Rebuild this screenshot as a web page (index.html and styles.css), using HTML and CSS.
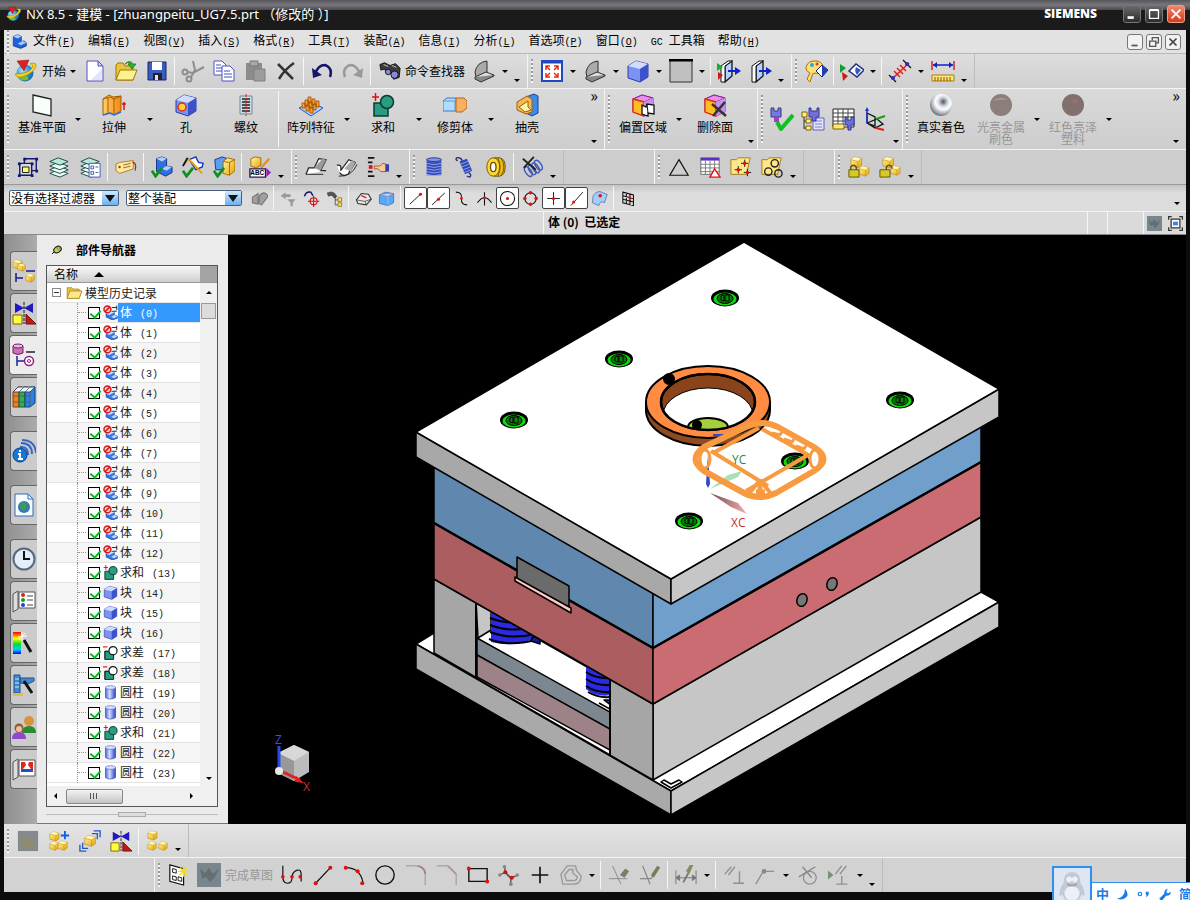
FILE: index.html
```
<!DOCTYPE html>
<html lang="zh-CN">
<head>
    <meta charset="UTF-8">
    <meta name="viewport" content="width=device-width, initial-scale=1.0">
    <title>NX 8.5 - 建模</title>
    <link rel="stylesheet" href="styles.css">
</head>
<body>
    <!-- icon sprite -->
    <svg class="sprite" aria-hidden="true">
        <defs>
            <linearGradient id="gBlue" x1="0" y1="0" x2="1" y2="1"><stop offset="0" stop-color="#c4d6ff"/><stop offset="1" stop-color="#3350d8"/></linearGradient>
            <linearGradient id="gGold" x1="0" y1="0" x2="1" y2="1"><stop offset="0" stop-color="#fff6a8"/><stop offset="1" stop-color="#e8a400"/></linearGradient>
            <linearGradient id="gOrange" x1="0" y1="0" x2="1" y2="0"><stop offset="0" stop-color="#ffcf6a"/><stop offset="1" stop-color="#f08a10"/></linearGradient>
            <linearGradient id="gRainbow" x1="0" y1="0" x2="0" y2="1"><stop offset="0" stop-color="#f00"/><stop offset=".3" stop-color="#ff0"/><stop offset=".55" stop-color="#0d3"/><stop offset=".8" stop-color="#0cf"/><stop offset="1" stop-color="#00f"/></linearGradient>
            <linearGradient id="gCyl" x1="0" y1="0" x2="1" y2="0"><stop offset="0" stop-color="#4a66e0"/><stop offset=".4" stop-color="#d4dcff"/><stop offset="1" stop-color="#2a40c0"/></linearGradient>
            <radialGradient id="gChrome" cx=".6" cy=".35" r=".7"><stop offset="0" stop-color="#50545c"/><stop offset=".3" stop-color="#d4dae2"/><stop offset=".5" stop-color="#fff"/><stop offset="1" stop-color="#5c6470"/></radialGradient>
            <radialGradient id="gGlobe" cx=".35" cy=".35" r=".8"><stop offset="0" stop-color="#aee4ff"/><stop offset=".5" stop-color="#2a9ae0"/><stop offset="1" stop-color="#0b4c9c"/></radialGradient>
        </defs>

        <symbol id="nx" viewBox="0 0 24 24"><circle cx="11" cy="14" r="8.500" fill="url(#gGlobe)"/><path d="M4 18q5 6 11 2l-4-5z" fill="#6fc040"/><path d="M1 15q2 6 12 1T22 5q-3-2-6 0 4 0 2 4-4 6-17 6z" fill="#f4d020" stroke="#b07a00" stroke-width=".6"/><path d="M3 2l12-1-5 11z" fill="#e02020" stroke="#901010" stroke-width=".5"/></symbol>
        <symbol id="partfile" viewBox="0 0 24 24"><path d="M2 4l7-3 6 3v8l4-1 4 3v5l-9 4-12-4z" fill="#2060d8" stroke="#0a2c88"/><path d="M2 4l7-3 6 3-6 3zM9 15l8-4 6 3-9 4z" fill="#a8ccff"/></symbol>
        <symbol id="new" viewBox="0 0 24 24"><path d="M4 2h11l5 5v15H4z" fill="#fff" stroke="#5050c8"/><path d="M15 2v5h5z" fill="#ccd0ff" stroke="#5050c8"/><path d="M8 21h11V10z" fill="#e0e4ff"/></symbol>
        <symbol id="open" viewBox="0 0 24 24"><path d="M2 21V6l2-2h5l2 3h8v14z" fill="#e8c440" stroke="#a07800"/><path d="M2 21L6 11h17l-4 10z" fill="#fff090" stroke="#a07800"/><path d="M11 5q5-5 8 0h3l-4 5-4-5h2q-2-3-5 0z" fill="#30b030" stroke="#107010" stroke-width=".7"/></symbol>
        <symbol id="save" viewBox="0 0 24 24"><path d="M3 3h18v18H3z" fill="#3a5cc0" stroke="#14246c"/><path d="M7 3h10v8H7z" fill="#fff"/><path d="M8 14h9v7H8z" fill="#222"/><path d="M10 16h3v5h-3z" fill="#dde"/></symbol>
        <symbol id="cut" viewBox="0 0 24 24"><g fill="none" stroke="#8d8d8d" stroke-width="2"><path d="M12 2l2 9-4 7M23 8l-11 6-6-1"/><circle cx="8" cy="20" r="2.500"/><circle cx="4" cy="13" r="2.500"/></g></symbol>
        <symbol id="copy" viewBox="0 0 24 24"><path d="M2 2h8l4 4v10H2z" fill="#fff" stroke="#5050c8"/><path d="M4 6h5M4 9h7M4 12h6" stroke="#3a50c0"/><path d="M10 7h8l4 4v11H10z" fill="#fff" stroke="#5050c8"/><path d="M12 12h6M12 15h8M12 18h8" stroke="#3a50c0"/></symbol>
        <symbol id="paste" viewBox="0 0 24 24"><path d="M3 4h16v17H3z" fill="#8c8c8c"/><path d="M7 2h8v5H7z" fill="#a8a8a8" stroke="#777"/><path d="M11 10h11v12H11z" fill="#9c9c9c" stroke="#808080"/></symbol>
        <symbol id="delete" viewBox="0 0 24 24"><path d="M4 5l15 15M20 4Q11 10 5 20" stroke="#333" stroke-width="2.500" fill="none"/></symbol>
        <symbol id="undo" viewBox="0 0 24 24"><path d="M5 15Q8 6 15 6q8 3 5 12" fill="none" stroke="#15156c" stroke-width="2.500"/><path d="M2 9l1 10 9-3z" fill="#15156c"/></symbol>
        <symbol id="redo" viewBox="0 0 24 24"><path d="M19 15Q16 6 9 6q-8 3-5 12" fill="none" stroke="#999" stroke-width="2.500"/><path d="M22 9l-1 10-9-3z" fill="#999"/></symbol>
        <symbol id="finder" viewBox="0 0 24 24"><path d="M1 5l5-2 6 3 6-2 5 5-1 10-6 2-3-7-4 1-3-5-4 1z" fill="#3c3c3c" stroke="#111"/><circle cx="17" cy="16" r="4" fill="#8888e0" stroke="#111"/><circle cx="10" cy="13" r="3" fill="#8888e0" stroke="#111"/><path d="M5 5l5 2M14 6l5 2" stroke="#ccc"/></symbol>
        <symbol id="sketchpad" viewBox="0 0 24 24"><path d="M3 13Q5 3 15 2v11L4 18z" fill="#aaa" stroke="#333"/><path d="M3 18l11-5 8 3-13 6z" fill="#ddd" stroke="#333"/><path d="M3 18v2l6 3 13-6v-1" fill="#888" stroke="#333"/></symbol>
        <symbol id="fit" viewBox="0 0 24 24"><path d="M2 2h20v20H2z" fill="#fff" stroke="#2048c0" stroke-width="2"/><path d="M2 3h20" stroke="#2048c0" stroke-width="3"/><path d="M6 11V7h4M14 7h4v4M18 14v4h-4M10 18H6v-4M6 7l4 4M18 7l-4 4M6 18l4-4M18 18l-4-4" stroke="#e03010" stroke-width="1.500" fill="none"/></symbol>
        <symbol id="cube" viewBox="0 0 24 24"><path d="M2 7l8-5 12 3v13l-8 5-12-4z" fill="#7c92f0" stroke="#2a3cac"/><path d="M2 7l8-5 12 3-8 5z" fill="#d0dcff"/><path d="M14 10l8-5v13l-8 5z" fill="#3c52cc"/></symbol>
        <symbol id="square" viewBox="0 0 24 24"><path d="M1 1h22v22H1z" fill="#c0c0c0" stroke="#333"/><path d="M0 1h24" stroke="#000" stroke-width="3"/></symbol>
        <symbol id="clip" viewBox="0 0 24 24"><path d="M8 7l7-5v15l-7 6z" fill="#b8d0ff" stroke="#111" stroke-width="1.300"/><path d="M4 7l7-5h4L8 7v16H4z" fill="#fff" stroke="#111"/><path d="M11 12h9" stroke="#1020d0" stroke-width="2"/><path d="M18 8l6 4-6 4z" fill="#1020d0"/></symbol>
        <symbol id="clip2" viewBox="0 0 24 24"><use href="#clip"/><path d="M0 4l6 4-6 4z" fill="#10b030"/><path d="M1 13l5 3-5 5z" fill="#d01818"/></symbol>
        <symbol id="palette" viewBox="0 0 24 24"><path d="M2 8q2-7 11-6 8 2 5 9-4 5-7 3-3 0-3 3l-2 6-3-3 3-6q-5-2-4-6z" fill="#ffe070" stroke="#a87010"/><circle cx="8" cy="6" r="2" fill="#28a8d8"/><circle cx="13" cy="5" r="1.500" fill="#e83820"/><path d="M12 12l6-6 6 5-6 7z" fill="#fff" stroke="#102080"/><path d="M18 6l6 5-6 7z" fill="#2040b0"/></symbol>
        <symbol id="showhide" viewBox="0 0 24 24"><path d="M0 5l6 4-6 5z" fill="#10a030"/><path d="M2 13l6 4-5 5z" fill="#d01818"/><path d="M9 12l7-7 8 6-7 7z" fill="#fff" stroke="#1c2c80" stroke-width="1.500"/><path d="M16 8l5 3-4 5q-3-4-1-8z" fill="#3858c0"/></symbol>
        <symbol id="distance" viewBox="0 0 24 24"><path d="M4 20L21 4" stroke="#e02020" stroke-width="1.500"/><path d="M6 12l6 6M9 9l6 6M12 6l6 6" stroke="#e02020" stroke-width="1.500"/><path d="M1 16l7 7M15 1l8 8" stroke="#111" stroke-width="1.300"/><circle cx="5" cy="19" r="2" fill="#2030d0"/><circle cx="19" cy="5" r="2" fill="#2030d0"/></symbol>
        <symbol id="ruler" viewBox="0 0 24 24"><path d="M1 2v9M23 2v9" stroke="#e02020" stroke-width="1.500"/><path d="M2 6h20" stroke="#1020c0" stroke-width="1.500"/><path d="M2 6l4-3v6zM22 6l-4-3v6z" fill="#1020c0"/><path d="M1 16h22v6H1z" fill="#ffe880" stroke="#b07800"/><path d="M4 18v4M7 18v4M10 18v4M13 18v4M16 18v4M19 18v4" stroke="#805000"/></symbol>

        <symbol id="plane" viewBox="0 0 24 24"><path d="M3 2l18 4v17L3 19z" fill="#f8fff8" stroke="#222" stroke-width="1.300"/></symbol>
        <symbol id="extrude" viewBox="0 0 24 24"><path d="M1 6l6-4 4 2 8-1v15l-7 4-4-2-7 2z" fill="url(#gOrange)" stroke="#a85a00"/><path d="M1 6l7-2 4 2 7-3M6 5v16M12 6v16" fill="none" stroke="#a85a00"/><path d="M1 22l7-2 4 2 7-3" fill="none" stroke="#3070d0" stroke-width="1.500"/><path d="M22 17V9M20 11h4" stroke="#e01010" stroke-width="1.500"/></symbol>
        <symbol id="hole" viewBox="0 0 24 24"><use href="#cube"/><circle cx="8" cy="14" r="4" fill="#ffd040" stroke="#e03010" stroke-width="1.500"/></symbol>
        <symbol id="thread" viewBox="0 0 24 24"><path d="M6 3h12v18H6z" fill="#c8dce4" stroke="#71899c"/><path d="M8 6h8M8 9h8M8 12h8M8 15h8M8 18h8" stroke="#222" stroke-width="1.500"/><path d="M12 1v22" stroke="#e02020" stroke-dasharray="3 1"/></symbol>
        <symbol id="pattern" viewBox="0 0 24 24"><path d="M0 15l12-6 12 6-12 8z" fill="#a8ccff" stroke="#2058c0"/><g fill="#f8a030" stroke="#a04c00" stroke-width=".8"><path d="M9 4h3v6H9zM13 6h3v6h-3zM17 8h3v6h-3zM6 7h3v6H6zM10 9h3v6h-3zM14 11h3v6h-3zM3 10h3v5H3zM7 12h3v6H7zM11 14h3v6h-3z"/></g></symbol>
        <symbol id="unite" viewBox="0 0 24 24"><path d="M3 10h14v13H3z" fill="#2a9c80" stroke="#0c3a30" stroke-width="1.500"/><circle cx="16" cy="9" r="6.500" fill="#2a9c80" stroke="#0c3a30" stroke-width="1.500"/><path d="M1 4h7M4.500 0v8" stroke="#e01010" stroke-width="1.500"/></symbol>
        <symbol id="subtract" viewBox="0 0 24 24"><path d="M3 10h14v13H3z" fill="#2a9c80" stroke="#0c1a18" stroke-width="1.500"/><circle cx="16" cy="9" r="6.500" fill="#fff" stroke="#0c1a18" stroke-width="1.800"/><path d="M3 23V10h6q1 6 8 6" fill="none" stroke="#0c1a18"/><path d="M0 3h7" stroke="#e01010" stroke-width="1.800"/></symbol>
        <symbol id="trim" viewBox="0 0 24 24"><path d="M0 8l4-3h9v13H0z" fill="#b0dcff" stroke="#3c78b8"/><path d="M13 5h8l3 3v7l-5 4h-6z" fill="#f8b060" stroke="#b06818"/><path d="M0 8h12l3-3M12 8v10" fill="none" stroke="#6898c8"/></symbol>
        <symbol id="shell" viewBox="0 0 24 24"><path d="M11 4l8-3 4 2v17l-6 3-6-3z" fill="#3a8ce8" stroke="#1a4490"/><path d="M2 9l10-6 5 3v13l-6 2-9-4z" fill="#f8b850" stroke="#986010"/><path d="M4 14l9-6v6l3 3-6 2z" fill="#fff4a0" stroke="#986010"/></symbol>
        <symbol id="face" viewBox="0 0 24 24"><path d="M2 6l9-4 11 3v14l-9 4-11-4z" fill="#fff" stroke="#8020a0"/><path d="M2 6l9-4 11 3-9 4z" fill="#e890e8" stroke="#902090"/><path d="M2 6l11 3v14L2 19z" fill="#ffbe20" stroke="#e02818" stroke-width="1.300"/><path d="M13 9l9-4v14l-9 4z" fill="#c890f0"/></symbol>
        <symbol id="offset" viewBox="0 0 24 24"><use href="#face"/><path d="M11 12l4 2 1-3 7 1v9l-6-1v3l-6-2z" fill="#fff" stroke="#111" stroke-width="1.300"/><path d="M17 20l-1-9" stroke="#111"/></symbol>
        <symbol id="delface" viewBox="0 0 24 24"><use href="#face"/><path d="M9 11l14 12M22 9L10 23" stroke="#333" stroke-width="2.500"/></symbol>
        <symbol id="verify" viewBox="0 0 24 24"><path d="M1 1h3v3h4V1h3v9H1z" fill="#7878e0" stroke="#333880"/><path d="M4 10h5v5H4z" fill="#a040c0"/><path d="M7 15l4 7L23 8" fill="none" stroke="#10c020" stroke-width="4"/></symbol>
        <symbol id="asmtree" viewBox="0 0 24 24"><path d="M3 8v14M3 14h5M3 21h5" stroke="#333"/><path d="M1 5h5v5H1zM5 12h5v4H5zM5 19h5v4H5z" fill="#fff090" stroke="#806000"/><path d="M12 11h11v12H12z" fill="#e4e4ff" stroke="#6060c0"/><path d="M14 14h7M14 17h7M14 20h7" stroke="#8080c0"/><path d="M8 1h2v3h6V1h2v9h-3v4h-4v-4H8z" fill="#7070d8" stroke="#303890"/></symbol>
        <symbol id="sheet" viewBox="0 0 24 24"><path d="M1 2h21v18H1z" fill="#fff" stroke="#222"/><path d="M1 6h21M1 10h21M1 14h21M6 2v18M11 2v18M16 2v18" stroke="#444"/><path d="M1 17h11v5H1z" fill="#ffe880" stroke="#806000"/><path d="M13 10h2v3h4v-3h3v8h-3v5h-3v-5h-3z" fill="#6870e0" stroke="#303890"/></symbol>
        <symbol id="csys" viewBox="0 0 24 24"><path d="M4 6l8 4v9l-8-3zM4 16l10-4 6 5-8 4z" fill="none" stroke="#111" stroke-width="1.300"/><path d="M4 16V2" stroke="#2030d0" stroke-width="1.500"/><path d="M2 4l2-4 2 4z" fill="#2030d0"/><path d="M13 12l9-3" stroke="#10a020" stroke-width="2"/><path d="M13 21l8 2" stroke="#e02010" stroke-width="2"/></symbol>
        <symbol id="chrome" viewBox="0 0 24 24"><circle cx="12" cy="12" r="11" fill="url(#gChrome)"/></symbol>
        <symbol id="metal" viewBox="0 0 24 24"><circle cx="12" cy="12" r="11" fill="#8c7f7b"/><path d="M4 8q6-6 15-1-6-1-15 1z" fill="#a19a97"/></symbol>
        <symbol id="plastic" viewBox="0 0 24 24"><circle cx="12" cy="12" r="11" fill="#82706e"/><circle cx="14" cy="8" r="3" fill="#94706e"/></symbol>

        <symbol id="group" viewBox="0 0 24 24"><path d="M8 3h13v13H8z" fill="none" stroke="#101870" stroke-width="1.500"/><path d="M3 8h13v13H3z" fill="#d8d8d8" stroke="#101870" stroke-width="1.500"/><path d="M6 12h7v6H6z" fill="#ffff60" stroke="#111"/><path d="M7 2h3v3H7zM20 2h3v3h-3zM20 15h3v3h-3zM1 7h3v3H1zM15 7h3v3h-3zM1 20h3v3H1zM15 20h3v3h-3z" fill="#101870"/></symbol>
        <symbol id="layers" viewBox="0 0 24 24"><g fill="#e8fff4" stroke="#1a4040"><path d="M2 19l9-4 11 4-9 4z"/><path d="M2 15l9-4 11 4-9 4z"/><path d="M2 11l9-4 11 4-9 4z"/><path d="M2 6l9-4 11 4-9 4z" fill="#b8e8d8"/></g></symbol>
        <symbol id="layerlist" viewBox="0 0 24 24"><use href="#layers"/><path d="M11 8h12v15H11z" fill="#fff" stroke="#3c50b0"/><path d="M13 11h3v3h-3zM13 17h3v3h-3z" fill="none" stroke="#3c50b0"/><path d="M18 12h3M18 18h3" stroke="#3c50b0"/></symbol>
        <symbol id="tag" viewBox="0 0 24 24"><path d="M1 9l4-2 15-2v9L5 19l-4-3z" fill="#ffe8a0" stroke="#b07820"/><circle cx="5" cy="12" r="1.300" fill="#805010"/><path d="M9 10l8-2M9 13l8-2" stroke="#906020"/><path d="M19 7q5 0 3 9" fill="none" stroke="#a03010" stroke-width="1.300"/></symbol>
        <symbol id="okpart" viewBox="0 0 24 24"><path d="M6 3l6-2 5 2v8l6 1v6l-7 4-10-5z" fill="#3070e0" stroke="#103080"/><path d="M6 3l6-2 5 2-5 3zM12 14l5-3 6 1-6 4z" fill="#b0d0ff"/><path d="M1 16l4 6 7-9" fill="none" stroke="#109020" stroke-width="3"/></symbol>
        <symbol id="okdraft" viewBox="0 0 24 24"><path d="M8 4l7-3 3 6 5 1-1 4-7 3z" fill="#fff" stroke="#2030c0" stroke-width="1.500"/><path d="M3 8l4-5 15 16" fill="none" stroke="#e0a010" stroke-width="2"/><path d="M1 11l5-9" stroke="#111" stroke-width="2"/><path d="M1 16l4 6 7-9" fill="none" stroke="#109020" stroke-width="3"/></symbol>
        <symbol id="okasm" viewBox="0 0 24 24"><path d="M2 4l8-3 6 2v12H3z" fill="#58a0f0" stroke="#103080"/><path d="M11 6l5-4 8 2v12l-6 5-7-2z" fill="url(#gGold)" stroke="#a06800"/><path d="M11 6l7 1 6-3M18 7v14" fill="none" stroke="#a06800"/><path d="M1 16l4 6 7-9" fill="none" stroke="#109020" stroke-width="3"/></symbol>
        <symbol id="bend" viewBox="0 0 24 24"><path d="M1 20L4 13h6l5-10 8 1-6 12h6" fill="#fff" stroke="#222" stroke-width="1.300"/><path d="M10 13l7 3 6-12-4-1z" fill="#999"/><path d="M1 20h19" stroke="#222"/></symbol>
        <symbol id="bend2" viewBox="0 0 24 24"><path d="M1 10q6-1 4 6l9-12 7 3-8 13q-6 3-9-2" fill="#fff" stroke="#222" stroke-width="1.300"/><path d="M9 14l7 3 5-10-4-2z" fill="#aaa"/><path d="M3 22q14 1 20-13" fill="none" stroke="#222"/></symbol>
        <symbol id="pick" viewBox="0 0 24 24"><path d="M1 1h7v2H1zM1 6h5v2H1zM1 16h5v2H1zM1 21h7v2H1z" fill="#111"/><path d="M2 10h4v4H2z" fill="#e01010"/><path d="M8 11h6l3-3 4 1v8h-6l-3-3H8z" fill="#ffc898" stroke="#a05820"/><path d="M20 9h4v8h-4z" fill="#3040b0"/></symbol>
        <symbol id="spring" viewBox="0 0 24 24"><path d="M4 4h16v17H4z" fill="#3048b8"/><path d="M4 5q8 3 16 0M4 8q8 3 16 0M4 11q8 3 16 0M4 14q8 3 16 0M4 17q8 3 16 0M4 20q8 3 16 0" fill="none" stroke="#98a8f0"/><ellipse cx="12" cy="4" rx="8" ry="2" fill="#8898e8" stroke="#203090"/></symbol>
        <symbol id="spring2" viewBox="0 0 24 24"><path d="M6 6l8-3 6 13-8 4z" fill="#3048b8"/><path d="M7 9l8-3M8 12l8-3M10 15l8-3M11 18l8-3" stroke="#98a8f0"/><path d="M9 5Q7 1 3 2q-2 2 1 3M16 18q4 3 1 5l-3-1" fill="none" stroke="#222f80" stroke-width="1.500"/></symbol>
        <symbol id="wheel" viewBox="0 0 24 24"><path d="M10 2h6q6 1 6 10t-6 10h-6z" fill="#f0c010" stroke="#604800"/><path d="M14 2q5 10 0 20M18 3q5 9 0 18" fill="none" stroke="#705000"/><ellipse cx="9" cy="12" rx="7" ry="10" fill="#ffd830" stroke="#705000"/><ellipse cx="9" cy="12" rx="3" ry="5" fill="#fff" stroke="#705000" stroke-width="1.500"/></symbol>
        <symbol id="nospring" viewBox="0 0 24 24"><g fill="none" stroke="#4058b8" stroke-width="1.500"><ellipse cx="8" cy="17" rx="3" ry="6" transform="rotate(-35 8 17)"/><ellipse cx="12" cy="15" rx="3" ry="6" transform="rotate(-35 12 15)"/><ellipse cx="16" cy="13" rx="3" ry="6" transform="rotate(-35 16 13)"/><ellipse cx="19" cy="10" rx="3" ry="6" transform="rotate(-35 19 10)"/></g><path d="M2 3l14 12M14 1L3 13" stroke="#222" stroke-width="2"/></symbol>
        <symbol id="tri" viewBox="0 0 24 24"><path d="M12 4l10 17H2z" fill="none" stroke="#111" stroke-width="1.300"/></symbol>
        <symbol id="table" viewBox="0 0 24 24"><path d="M2 2h20v18H2z" fill="#fff" stroke="#666"/><path d="M2 2h20v3H2z" fill="#6030c0"/><path d="M2 9h20M2 13h20M2 17h20M7 5v15M12 5v15M17 5v15" stroke="#777"/><path d="M17 14l6 9H12z" fill="#fff" stroke="#e01010" stroke-width="1.500"/></symbol>
        <symbol id="folder" viewBox="0 0 24 24"><path d="M1 20V4h7l2 2h9v3h4l-4 11z" fill="#e8c040" stroke="#a07810"/><path d="M1 20L5 9h18l-4 11z" fill="#ffe888" stroke="#a07810"/></symbol>
        <symbol id="fpoints" viewBox="0 0 24 24"><path d="M1 20V4h6l2-2h13l-4 18z" fill="#ffe888" stroke="#a07810"/><path d="M12 8h8M16 4v8M5 15h8M9 11v8M15 18h8M19 14v8" stroke="#111"/><g fill="#e01010"><circle cx="16" cy="8" r="2"/><circle cx="9" cy="15" r="2"/><circle cx="19" cy="18" r="2"/></g></symbol>
        <symbol id="fcircles" viewBox="0 0 24 24"><path d="M1 20V4h6l2-2h13l-4 18z" fill="#ffe888" stroke="#a07810"/><g fill="none" stroke="#222" stroke-width="1.500"><circle cx="15" cy="8" r="4"/><circle cx="8" cy="17" r="4"/><circle cx="19" cy="19" r="4"/></g></symbol>
        <symbol id="ycube" viewBox="0 0 24 24"><path d="M2 7l7-5 13 3v12l-7 5-13-4z" fill="url(#gGold)" stroke="#b07800"/><path d="M2 7l7-5 13 3-7 5z" fill="#fff8b8"/><path d="M15 10v12M2 7l13 3 7-5" fill="none" stroke="#c08800"/></symbol>
        <symbol id="lock" viewBox="0 0 24 24"><use href="#ycube" x="2" y="0" width="14" height="14"/><use href="#ycube" x="11" y="10" width="13" height="13"/><path d="M1 15h11v8H1z" fill="#d8c828" stroke="#605000"/><path d="M3 15v-3q3-4 6 0v3" fill="none" stroke="#605000" stroke-width="1.500"/></symbol>
        <symbol id="unlock" viewBox="0 0 24 24"><use href="#ycube" x="3" y="0" width="14" height="14"/><use href="#ycube" x="12" y="10" width="12" height="12"/><path d="M1 15h11v8H1z" fill="#d8c828" stroke="#605000"/><path d="M8 15v-3q3-4 6 0v2" fill="none" stroke="#605000" stroke-width="1.500"/></symbol>

        <symbol id="chain" viewBox="0 0 24 24"><path d="M2 10l8-5v15l-8-2zM12 8q4-6 9-3t0 8l-6 8-4-2z" fill="#a0a0a0" stroke="#777" stroke-width="1.500"/></symbol>
        <symbol id="filterback" viewBox="0 0 24 24"><path d="M1 8l7-5v3h7v4H8v3zM10 13h12l-4 5v5h-3v-5z" fill="#999"/></symbol>
        <symbol id="target" viewBox="0 0 24 24"><path d="M2 9q2-7 9-6l3 5" fill="none" stroke="#101060" stroke-width="2"/><g fill="none" stroke="#d01010" stroke-width="1.500"><circle cx="15" cy="16" r="5"/><path d="M7 16h16M15 8v16"/></g></symbol>
        <symbol id="findtree" viewBox="0 0 24 24"><path d="M1 4l6-2 5 2 4 5-4 3-4-4-5 1z" fill="#555"/><path d="M13 9v12h5M13 14h5" fill="none" stroke="#333"/><path d="M17 11h5v5h-5zM17 18h5v5h-5z" fill="#ffe070" stroke="#806000"/></symbol>
        <symbol id="wirebox" viewBox="0 0 24 24"><path d="M2 14l7-9 10 1 4 7-7 8-12-2z" fill="#e8e8e8" stroke="#333" stroke-width="1.500"/><path d="M2 14l12 2 9-3M14 16l2 5" fill="none" stroke="#333"/><path d="M9 8l7 3" stroke="#e02020" stroke-width="2"/></symbol>
        <symbol id="glassbox" viewBox="0 0 24 24"><path d="M2 7l8-4 12 2v13l-8 4-12-3z" fill="#58a8f8" stroke="#3a60b8"/><path d="M2 7l12 2 8-4" fill="#c8e4ff" stroke="#e05050"/><path d="M14 9v13" stroke="#9cf"/></symbol>
        <symbol id="sEnd" viewBox="0 0 24 24"><path d="M4 20L19 6" stroke="#111" stroke-width="1.300"/><circle cx="19" cy="6" r="2.200" fill="#e01010"/></symbol>
        <symbol id="sMid" viewBox="0 0 24 24"><path d="M3 21L21 4" stroke="#111" stroke-width="1.300"/><circle cx="12" cy="13" r="2.200" fill="#e01010"/></symbol>
        <symbol id="sCurve" viewBox="0 0 24 24"><path d="M4 3q9 0 8 9t8 9" fill="none" stroke="#111" stroke-width="1.500"/><circle cx="12" cy="12" r="2" fill="#e01010"/></symbol>
        <symbol id="sCross" viewBox="0 0 24 24"><path d="M2 18q10-14 20 0M12 3v19" fill="none" stroke="#111" stroke-width="1.500"/><circle cx="12" cy="11" r="2" fill="#e01010"/></symbol>
        <symbol id="sCenter" viewBox="0 0 24 24"><circle cx="12" cy="12" r="10" fill="none" stroke="#111" stroke-width="1.500"/><circle cx="12" cy="12" r="2.200" fill="#e01010"/></symbol>
        <symbol id="sQuad" viewBox="0 0 24 24"><circle cx="12" cy="12" r="8" fill="none" stroke="#111" stroke-width="1.500"/><g fill="#e01010"><circle cx="12" cy="4" r="2.500"/><circle cx="12" cy="20" r="2.500"/><circle cx="4" cy="12" r="2.500"/><circle cx="20" cy="12" r="2.500"/></g></symbol>
        <symbol id="sPoint" viewBox="0 0 24 24"><path d="M3 12h18M12 3v18" stroke="#111" stroke-width="1.300"/><circle cx="12" cy="12" r="2.200" fill="#e01010"/></symbol>
        <symbol id="sOn" viewBox="0 0 24 24"><path d="M4 22L21 3" stroke="#111" stroke-width="1.300"/><circle cx="8" cy="17" r="2.200" fill="#e01010"/></symbol>
        <symbol id="sFace" viewBox="0 0 24 24"><path d="M3 8q6-8 12-5t8 3l-4 12q-6-4-8 4l-9-4z" fill="#a8ccf8" stroke="#3868a8"/><circle cx="13" cy="8" r="2.500" fill="#e01010"/></symbol>
        <symbol id="sGrid" viewBox="0 0 24 24"><path d="M4 3l15 4v15L4 18zM9 4v15M14 6v15M4 8l15 4M4 13l15 4" fill="none" stroke="#111" stroke-width="1.500"/><circle cx="14" cy="11" r="2" fill="#e01010"/></symbol>
        <symbol id="noise" viewBox="0 0 24 24"><path d="M0 0h24v24H0z" fill="#78868e"/><path d="M3 6l5 4 4-5 4 6 6-6-4 9-5 5-4-5-4 2z" fill="#676e72"/></symbol>
        <symbol id="noiseA" viewBox="0 0 24 24"><path d="M1 1h22v22H1z" fill="#84898c"/><path d="M6 9l5-3 2 5 5 0v8H5z" fill="#8f8b70"/></symbol>
        <symbol id="fullscreen" viewBox="0 0 24 24"><path d="M1 6V1h5M18 1h5v5M23 18v5h-5M6 23H1v-5" fill="none" stroke="#333" stroke-width="2"/><path d="M5 5h14v14H5z" fill="#fff" stroke="#333" stroke-width="2"/><path d="M8 9h8v6H8z" fill="#3888e8"/></symbol>

        <symbol id="asmnav" viewBox="0 0 24 24"><use href="#ycube" x="0" y="0" width="11" height="11"/><use href="#ycube" x="5" y="4" width="9" height="9"/><use href="#ycube" x="13" y="14" width="10" height="10"/><path d="M14 12h9M4 14v9M4 19h7" stroke="#1a1a90" stroke-width="1.500"/></symbol>
        <symbol id="mirror" viewBox="0 0 24 24"><path d="M3 2l9 5-9 5zM21 2l-9 5 9 5z" fill="#2018c0"/><path d="M12 1v22" stroke="#111" stroke-dasharray="3 1"/><path d="M1 14h9v9H1z" fill="#ffff40" stroke="#806000"/><path d="M14 13v10h10z" fill="#c01818" stroke="#701010"/></symbol>
        <symbol id="partnav" viewBox="0 0 24 24"><path d="M1 3v7q5 3 10 0V3z" fill="#c870b8" stroke="#702068"/><ellipse cx="6" cy="3" rx="5" ry="2" fill="#f0b8e0" stroke="#702068"/><path d="M14 9h9" stroke="#222" stroke-width="1.500"/><path d="M5 13v10M5 18h7" stroke="#2020a0" stroke-width="1.500"/><circle cx="17" cy="18" r="4.500" fill="#fff" stroke="#902080" stroke-width="1.500"/><circle cx="17" cy="18" r="1.500" fill="none" stroke="#902080"/></symbol>
        <symbol id="books" viewBox="0 0 24 24"><path d="M1 7l5-5h4L7 7v15H1z" fill="#f08020" stroke="#884010"/><path d="M7 7l5-5h4l-3 5v15H7z" fill="#30b050" stroke="#106020"/><path d="M13 7l5-5h5v16l-5 4h-5z" fill="#3080e0" stroke="#104080"/><path d="M1 7l5-5h17l-5 5z" fill="#e8f4ff" stroke="#446"/><path d="M1 11h17M1 17h17M18 7v15M7 7l5-5M13 7l5-5" stroke="#555" stroke-width=".8"/></symbol>
        <symbol id="info" viewBox="0 0 24 24"><path d="M8 8q8-1 8 8M9 4q11 0 11 11M10 1q13 0 14 13" fill="none" stroke="#3868c0" stroke-width="2"/><circle cx="8" cy="16" r="7" fill="#1878d8" stroke="#0c3c88"/><path d="M8 11v2M6 15h2v5M6 20h5" stroke="#fff" stroke-width="2" fill="none"/></symbol>
        <symbol id="webdoc" viewBox="0 0 24 24"><path d="M3 1h13l5 5v17H3z" fill="#f4fcff" stroke="#3868b0"/><path d="M16 1v5h5" fill="none" stroke="#3868b0"/><circle cx="12" cy="14" r="6" fill="#3878c0"/><path d="M8 11l4-2 3 4-3 5-3-2z" fill="#40a040"/></symbol>
        <symbol id="clock" viewBox="0 0 24 24"><circle cx="12" cy="12" r="10.500" fill="#e4eefa" stroke="#56687c" stroke-width="2"/><path d="M12 4v8h6" fill="none" stroke="#111" stroke-width="2"/></symbol>
        <symbol id="cards" viewBox="0 0 24 24"><path d="M1 5l5-3v18l-5 3z" fill="#ddd" stroke="#555"/><path d="M7 3h16v16H7z" fill="#fff" stroke="#555"/><circle cx="11" cy="6" r="2" fill="#e02020"/><circle cx="11" cy="11" r="2" fill="#10a020"/><circle cx="11" cy="16" r="2" fill="#2040d0"/><path d="M15 7h6M15 11h6M15 16h6" stroke="#444"/></symbol>
        <symbol id="rainbow" viewBox="0 0 24 24"><path d="M1 1h8v22H1z" fill="url(#gRainbow)"/><path d="M12 9l7 12" stroke="#111" stroke-width="3"/><path d="M10 1v9M6 6l9-1M7 9l6-7" stroke="#fff"/></symbol>
        <symbol id="machine" viewBox="0 0 24 24"><path d="M2 2h6v18H2zM8 5h14v3l-6 3-8-1z" fill="#4088d0" stroke="#205090"/><path d="M3 6h4M3 10h4M3 14h4" stroke="#cef"/><path d="M1 20h10v3H1z" fill="#e8b840"/><path d="M12 8l8 12" stroke="#111" stroke-width="3"/></symbol>
        <symbol id="people" viewBox="0 0 24 24"><circle cx="17" cy="6" r="5" fill="#d8943c"/><path d="M10 18q0-7 7-7t7 7z" fill="#2a8a30"/><circle cx="7" cy="13" r="4.500" fill="#8c5a3c"/><circle cx="7" cy="14" r="3" fill="#f0c090"/><path d="M0 24q0-7 7-7t7 7z" fill="#9048c8"/></symbol>
        <symbol id="cards2" viewBox="0 0 24 24"><path d="M1 5l5-3v18l-5 3z" fill="#ddd" stroke="#555"/><path d="M7 3h16v16H7z" fill="#fff" stroke="#555"/><path d="M9 5h12v9H9z" fill="#e02818"/><path d="M13 5h4l-1 3 3 4h-8l3-4z" fill="#fff"/><path d="M9 12h12v3H9z" fill="#2850c0"/></symbol>
        <symbol id="pin" viewBox="0 0 24 24"><path d="M2 20l6-6" stroke="#111" stroke-width="2"/><ellipse cx="13" cy="11" rx="8" ry="6" transform="rotate(-35 13 11)" fill="#c8c850" stroke="#111" stroke-width="2"/><ellipse cx="15" cy="8" rx="3" ry="2" fill="#fff" stroke="#111"/></symbol>
        <symbol id="body" viewBox="0 0 24 24"><path d="M5 14l9-4 4 2v4l5 2v3l-8 3-10-5z" fill="#3878e8" stroke="#103080"/><path d="M5 14l9-4 4 2-8 4zM13 19l5-3 5 2-5 3z" fill="#c0dcff"/><path d="M14 4h8M15 10h7M22 1v7" stroke="#222" stroke-width="1.500"/><circle cx="7" cy="7" r="5.500" fill="#f8d0d0" stroke="#d81818" stroke-width="2.300"/><path d="M3 11l8-8" stroke="#d81818" stroke-width="2.300"/></symbol>
        <symbol id="cyl" viewBox="0 0 24 24"><path d="M4 4v16q8 5 16 0V4z" fill="url(#gCyl)" stroke="#3040a0"/><ellipse cx="12" cy="4" rx="8" ry="3" fill="#d8e0ff" stroke="#5060c0"/></symbol>

        <symbol id="addpart" viewBox="0 0 24 24"><use href="#ycube" x="1" y="1" width="12" height="12"/><use href="#ycube" x="1" y="12" width="11" height="11"/><use href="#ycube" x="10" y="11" width="12" height="12"/><path d="M14 6h9M18.500 1v9" stroke="#1060e0" stroke-width="2"/></symbol>
        <symbol id="movepart" viewBox="0 0 24 24"><use href="#ycube" x="5" y="5" width="14" height="14"/><path d="M16 1h7v7M14 4h6v6" fill="none" stroke="#2858c8" stroke-width="1.500"/><path d="M1 16v7h7M4 14v6h6" fill="none" stroke="#2858c8" stroke-width="1.500"/></symbol>
        <symbol id="parts3" viewBox="0 0 24 24"><use href="#ycube" x="1" y="0" width="12" height="12"/><use href="#ycube" x="1" y="12" width="11" height="11"/><use href="#ycube" x="13" y="12" width="11" height="11"/></symbol>
        <symbol id="sketch" viewBox="0 0 24 24"><path d="M2 1l15 4v18L2 19z" fill="#fff" stroke="#111" stroke-width="1.300"/><path d="M5 5l4 1v4l-4-1zM5 13l4 1v4l-4-1zM11 14l4 1v4l-4-1z" fill="none" stroke="#111"/><path d="M17 2v12M11 8h12M13 4l8 8M21 4l-8 8" stroke="#f0e020" stroke-width="1.500"/></symbol>
        <symbol id="profile" viewBox="0 0 24 24"><path d="M2 2v12q0 7 5 7t5-6 5-8 5 5v7" fill="none" stroke="#111" stroke-width="1.300"/><g fill="#e01010"><circle cx="2" cy="14" r="2"/><circle cx="12" cy="14" r="2"/><circle cx="21" cy="14" r="2"/></g></symbol>
        <symbol id="line" viewBox="0 0 24 24"><path d="M4 21L20 4" stroke="#111" stroke-width="1.300"/><circle cx="4" cy="21" r="2.200" fill="#e01010"/><circle cx="20" cy="4" r="2.200" fill="#e01010"/></symbol>
        <symbol id="arc" viewBox="0 0 24 24"><path d="M3 4q16 0 19 17" fill="none" stroke="#111" stroke-width="1.300"/><g fill="#e01010"><circle cx="3" cy="4" r="2.200"/><circle cx="16" cy="8" r="2.200"/><circle cx="21" cy="21" r="2.200"/></g></symbol>
        <symbol id="circle" viewBox="0 0 24 24"><circle cx="12" cy="12" r="10" fill="none" stroke="#111" stroke-width="1.500"/></symbol>
        <symbol id="fillet" viewBox="0 0 24 24"><path d="M1 2h11q9 1 10 8v13" fill="none" stroke="#909090"/><path d="M14 2q8 2 8 9" fill="none" stroke="#a88080" stroke-width="2"/></symbol>
        <symbol id="chamfer" viewBox="0 0 24 24"><path d="M1 2h12l9 9v12" fill="none" stroke="#909090"/><path d="M13 2l9 9" stroke="#b09090" stroke-width="2"/></symbol>
        <symbol id="rect" viewBox="0 0 24 24"><path d="M2 5h20v14H2z" fill="none" stroke="#111" stroke-width="1.500"/><circle cx="2" cy="5" r="2.200" fill="#e01010"/><circle cx="22" cy="19" r="2.200" fill="#e01010"/></symbol>
        <symbol id="spline" viewBox="0 0 24 24"><path d="M2 12l6-3 6 6 6-2M8 9L7 2M14 15v7M8 9q3 5 6 6" fill="none" stroke="#555" stroke-width="1.500"/><g fill="#888"><circle cx="7" cy="3" r="2"/><circle cx="2" cy="12" r="2"/><circle cx="14" cy="22" r="2"/><circle cx="21" cy="12" r="2"/></g><circle cx="8" cy="9" r="2.300" fill="#d01010"/><circle cx="15" cy="15" r="2.300" fill="#d01010"/></symbol>
        <symbol id="plus" viewBox="0 0 24 24"><path d="M3 12h18M12 3v18" stroke="#111" stroke-width="1.800"/></symbol>
        <symbol id="offsetcurve" viewBox="0 0 24 24"><path d="M3 22L1 11 8 2h9l1 5 5 6q0 9-9 9zM7 18l-2-6 5-6h4v4l5 4q-1 5-6 4z" fill="none" stroke="#999" stroke-width="1.500"/></symbol>
        <symbol id="qtrim" viewBox="0 0 24 24"><path d="M5 2l9 20M1 16h20" stroke="#888" fill="none"/><path d="M13 12l6-7 4 3-5 7z" fill="#7c7c68"/></symbol>
        <symbol id="qextend" viewBox="0 0 24 24"><path d="M4 2l8 20M1 16h12L22 3" stroke="#888" fill="none" stroke-width="1.300"/><path d="M13 12l7-10 3 2-7 11z" fill="#7c7c58"/></symbol>
        <symbol id="dim" viewBox="0 0 24 24"><path d="M1 7v15M23 7v15M1 15h22M1 15l4-3v6zM23 15l-4-3v6z" fill="#777" stroke="#777"/><path d="M9 20l6-11" stroke="#777" stroke-width="2"/><path d="M12 8l4-7h4l-4 9z" fill="#8a8a60"/></symbol>
        <symbol id="constraint" viewBox="0 0 24 24"><path d="M2 11L9 3M6 12l7-9M18 8v13M11 21h12" stroke="#909090" stroke-width="1.500"/></symbol>
        <symbol id="corner" viewBox="0 0 24 24"><path d="M2 22L10 8h12" fill="none" stroke="#909090" stroke-width="1.500"/><circle cx="11" cy="8" r="2.500" fill="#888"/></symbol>
        <symbol id="tangent" viewBox="0 0 24 24"><circle cx="14" cy="15" r="7" fill="none" stroke="#909090" stroke-width="1.500"/><path d="M2 14L20 3M6 3l10 12" stroke="#888" stroke-width="1.500"/></symbol>
        <symbol id="showcon" viewBox="0 0 24 24"><path d="M0 7l6 5-6 5z" fill="#789078"/><path d="M8 11l7-9M13 11l7-9M15 13v9M9 22h12" stroke="#909090" stroke-width="1.500"/></symbol>
        <symbol id="moon" viewBox="0 0 24 24"><path d="M15 2q7 8 4 14-6 8-18 4 8-1 11-6 4-5 3-12z" fill="#1a7ce8"/></symbol>
        <symbol id="punct" viewBox="0 0 24 24"><circle cx="5" cy="12" r="3" fill="none" stroke="#1a7ce8" stroke-width="2"/><path d="M15 8h5v5l-4 5v-5h-1z" fill="#1a7ce8"/></symbol>
        <symbol id="wrench" viewBox="0 0 24 24"><path d="M2 20l9-9q-1-7 6-8l-3 5 3 3 5-3q0 7-8 7l-8 9z" fill="#1a7ce8"/></symbol>
        <symbol id="penguin" viewBox="0 0 34 34"><path d="M17 2q9 0 9 12 5 6 4 14l-3-2q-2 8-10 8T7 26l-3 2q-1-8 4-14Q8 2 17 2z" fill="#c2c8d4"/><ellipse cx="17" cy="25" rx="8" ry="8" fill="#eceff5"/><circle cx="14" cy="10" r="3" fill="#eceff5"/><circle cx="20" cy="10" r="3" fill="#eceff5"/><path d="M12 15q5 3 10 0" stroke="#9aa2b4" fill="none" stroke-width="2"/></symbol>
        <symbol id="screw" viewBox="0 0 30 18"><ellipse cx="15" cy="9" rx="14" ry="8.500" fill="#000"/><ellipse cx="15" cy="10" rx="11.500" ry="6.500" fill="#12d812"/><ellipse cx="15" cy="9.500" rx="8" ry="5" fill="#067806" stroke="#000"/><path d="M11 7l3-1v6l-3-1zM15 6h4v6h-4z" fill="#0a8c0a" stroke="#000"/></symbol>
    </svg>

    <header class="titlebar">
        <svg class="app-icon"><use href="#nx"/></svg>
        <h1>NX 8.5 - 建模 - [zhuangpeitu_UG7.5.prt （修改的 ）]</h1>
        <strong class="brand">SIEMENS</strong>
        <button class="win-btn" aria-label="最小化"><svg viewBox="0 0 18 18"><path d="M4 13h7" stroke="#fff" stroke-width="3"/></svg></button>
        <button class="win-btn" aria-label="最大化"><svg viewBox="0 0 18 18"><path d="M4 5h10v9H4zM4 4h10" fill="none" stroke="#fff" stroke-width="1.500"/></svg></button>
        <button class="win-btn close" aria-label="关闭"><svg viewBox="0 0 18 18"><path d="M4 4l10 10M14 4L4 14" stroke="#fff" stroke-width="2"/></svg></button>
    </header>

    <div class="window">
        <nav class="menubar">
            <span class="grip"></span>
            <svg class="doc-icon"><use href="#partfile"/></svg>
            <button>文件<span class="key">(<u>F</u>)</span></button>
            <button>编辑<span class="key">(<u>E</u>)</span></button>
            <button>视图<span class="key">(<u>V</u>)</span></button>
            <button>插入<span class="key">(<u>S</u>)</span></button>
            <button>格式<span class="key">(<u>R</u>)</span></button>
            <button>工具<span class="key">(<u>T</u>)</span></button>
            <button>装配<span class="key">(<u>A</u>)</span></button>
            <button>信息<span class="key">(<u>I</u>)</span></button>
            <button>分析<span class="key">(<u>L</u>)</span></button>
            <button>首选项<span class="key">(<u>P</u>)</span></button>
            <button>窗口<span class="key">(<u>O</u>)</span></button>
            <button><span class="key">GC </span>工具箱</button>
            <button>帮助<span class="key">(<u>H</u>)</span></button>
            <div class="mdi">
                <button aria-label="最小化文档"><svg viewBox="0 0 16 16"><path d="M4 12h7" stroke="#555" stroke-width="2"/></svg></button>
                <button aria-label="还原文档"><svg viewBox="0 0 16 16"><path d="M6 6V3h7v6h-3M3 7h7v6H3z" fill="none" stroke="#555" stroke-width="1.500"/></svg></button>
                <button aria-label="关闭文档"><svg viewBox="0 0 16 16"><path d="M4 4l8 8M12 4l-8 8" stroke="#444" stroke-width="2"/></svg></button>
            </div>
        </nav>

        <div class="row">
            <div class="toolbar">
                <span class="grip"></span>
                <button class="btn-text start"><svg><use href="#nx"/></svg>开始<i class="caret"></i></button>
                <button class="btn" title="新建"><svg><use href="#new"/></svg></button>
                <button class="btn" title="打开"><svg><use href="#open"/></svg></button>
                <button class="btn" title="保存"><svg><use href="#save"/></svg></button>
                <span class="sep"></span>
                <button class="btn" title="剪切" disabled><svg><use href="#cut"/></svg></button>
                <button class="btn" title="复制"><svg><use href="#copy"/></svg></button>
                <button class="btn" title="粘贴" disabled><svg><use href="#paste"/></svg></button>
                <button class="btn" title="删除"><svg><use href="#delete"/></svg></button>
                <span class="sep"></span>
                <button class="btn" title="撤消"><svg><use href="#undo"/></svg></button>
                <button class="btn" title="重做" disabled><svg><use href="#redo"/></svg></button>
                <span class="sep"></span>
                <button class="btn-text finder"><svg><use href="#finder"/></svg>命令查找器</button>
                <button class="btn" title="草图"><svg><use href="#sketchpad"/></svg></button>
                <button class="arrow"></button>
                <button class="arrow more"></button>
            </div>
            <div class="toolbar">
                <span class="grip"></span>
                <button class="btn" title="适合窗口"><svg><use href="#fit"/></svg></button>
                <button class="arrow"></button>
                <button class="btn" title="定向视图"><svg><use href="#sketchpad"/></svg></button>
                <button class="arrow"></button>
                <button class="btn" title="着色"><svg><use href="#cube"/></svg></button>
                <button class="arrow"></button>
                <button class="btn" title="背景"><svg><use href="#square"/></svg></button>
                <button class="arrow"></button>
                <span class="sep"></span>
                <button class="btn" title="剪切截面"><svg><use href="#clip2"/></svg></button>
                <button class="btn" title="编辑截面"><svg><use href="#clip"/></svg></button>
                <button class="arrow more"></button>
            </div>
            <div class="toolbar last">
                <span class="grip"></span>
                <button class="btn" title="编辑对象显示"><svg><use href="#palette"/></svg></button>
                <span class="sep"></span>
                <button class="btn" title="显示和隐藏"><svg><use href="#showhide"/></svg></button>
                <button class="arrow"></button>
                <span class="sep"></span>
                <button class="btn" title="测量距离"><svg><use href="#distance"/></svg></button>
                <button class="arrow"></button>
                <button class="btn" title="测量"><svg><use href="#ruler"/></svg></button>
                <button class="arrow more"></button>
            </div>
        </div>

        <div class="row tall">
            <div class="toolbar features">
                <span class="grip"></span>
                <button class="big"><svg><use href="#plane"/></svg><span>基准平面</span></button>
                <button class="arrow"></button>
                <button class="big"><svg><use href="#extrude"/></svg><span>拉伸</span></button>
                <button class="arrow"></button>
                <button class="big"><svg><use href="#hole"/></svg><span>孔</span></button>
                <button class="big"><svg><use href="#thread"/></svg><span>螺纹</span></button>
                <span class="sep"></span>
                <button class="big"><svg><use href="#pattern"/></svg><span>阵列特征</span></button>
                <button class="arrow"></button>
                <button class="big"><svg><use href="#unite"/></svg><span>求和</span></button>
                <button class="arrow"></button>
                <button class="big"><svg><use href="#trim"/></svg><span>修剪体</span></button>
                <button class="arrow"></button>
                <button class="big"><svg><use href="#shell"/></svg><span>抽壳</span></button>
                <div class="overflow"><button>»</button><button class="arrow more"></button></div>
            </div>
            <div class="toolbar">
                <span class="grip"></span>
                <button class="big"><svg><use href="#offset"/></svg><span>偏置区域</span></button>
                <button class="arrow"></button>
                <button class="big"><svg><use href="#delface"/></svg><span>删除面</span></button>
                <button class="arrow more"></button>
            </div>
            <div class="toolbar">
                <span class="grip"></span>
                <button class="btn" title="检查"><svg><use href="#verify"/></svg></button>
                <button class="btn" title="装配结构"><svg><use href="#asmtree"/></svg></button>
                <button class="btn" title="电子表格"><svg><use href="#sheet"/></svg></button>
                <button class="btn" title="坐标系"><svg><use href="#csys"/></svg></button>
                <button class="arrow more"></button>
            </div>
            <div class="toolbar grow">
                <span class="grip"></span>
                <button class="big"><svg><use href="#chrome"/></svg><span>真实着色</span></button>
                <button class="big" disabled><svg><use href="#metal"/></svg><span>光亮金属<br>刷色</span></button>
                <button class="arrow"></button>
                <button class="big" disabled><svg><use href="#plastic"/></svg><span>红色亮泽<br>塑料</span></button>
                <button class="arrow"></button>
                <div class="overflow"><button>»</button><button class="arrow more"></button></div>
            </div>
        </div>

        <div class="row flat">
            <div class="toolbar">
                <span class="grip"></span>
                <button class="btn" title="分组"><svg><use href="#group"/></svg></button>
                <button class="btn" title="图层设置"><svg><use href="#layers"/></svg></button>
                <button class="btn" title="图层类别"><svg><use href="#layerlist"/></svg></button>
                <span class="sep"></span>
                <button class="btn" title="属性"><svg><use href="#tag"/></svg></button>
                <span class="sep"></span>
                <button class="btn" title="检查部件"><svg><use href="#okpart"/></svg></button>
                <button class="btn" title="检查制图"><svg><use href="#okdraft"/></svg></button>
                <button class="btn" title="检查装配"><svg><use href="#okasm"/></svg></button>
                <span class="sep"></span>
                <button class="btn" title="重命名">
                    <svg viewBox="0 0 24 24"><path d="M2 3l5-2 6 1v8l-5 3-6-2z" fill="url(#gGold)" stroke="#a06800"/><path d="M22 3l-9 10" stroke="#e09020" stroke-width="2.500"/><path d="M1 14h17v9H1z" fill="#fff" stroke="#301060" stroke-width="1.500"/><path d="M19 13l5 5-5 5z" fill="#9020b0"/><text x="9" y="21" class="abc">ABC</text></svg>
                </button>
                <button class="arrow more"></button>
            </div>
            <div class="toolbar">
                <span class="grip"></span>
                <button class="btn" title="弯边"><svg><use href="#bend"/></svg></button>
                <button class="btn" title="折弯"><svg><use href="#bend2"/></svg></button>
                <button class="btn" title="选取"><svg><use href="#pick"/></svg></button>
                <button class="arrow more"></button>
            </div>
            <div class="toolbar last">
                <span class="grip"></span>
                <button class="btn" title="压缩弹簧"><svg><use href="#spring"/></svg></button>
                <button class="btn" title="拉伸弹簧"><svg><use href="#spring2"/></svg></button>
                <button class="btn" title="带轮"><svg><use href="#wheel"/></svg></button>
                <span class="sep"></span>
                <button class="btn" title="删除弹簧"><svg><use href="#nospring"/></svg></button>
                <button class="arrow more"></button>
            </div>
            <div class="toolbar last far">
                <span class="grip"></span>
                <button class="btn" title="三角形"><svg><use href="#tri"/></svg></button>
                <button class="btn" title="表格"><svg><use href="#table"/></svg></button>
                <button class="btn" title="点集"><svg><use href="#fpoints"/></svg></button>
                <button class="btn" title="圆集"><svg><use href="#fcircles"/></svg></button>
                <button class="arrow more"></button>
            </div>
            <div class="toolbar last near">
                <span class="grip"></span>
                <button class="btn" title="锁定"><svg><use href="#lock"/></svg></button>
                <button class="btn" title="解锁"><svg><use href="#unlock"/></svg></button>
                <button class="arrow more"></button>
            </div>
        </div>

        <div class="selectbar">
            <span class="combo"><select aria-label="选择过滤器"><option>没有选择过滤器</option></select></span>
            <span class="combo wide"><select aria-label="选择范围"><option>整个装配</option></select></span>
            <button class="sbtn" title="链接" disabled><svg><use href="#chain"/></svg></button>
            <span class="sep"></span>
            <button class="sbtn" title="重置过滤器" disabled><svg><use href="#filterback"/></svg></button>
            <button class="sbtn" title="全不选"><svg><use href="#target"/></svg></button>
            <button class="sbtn" title="在导航器中查找"><svg><use href="#findtree"/></svg></button>
            <span class="sep"></span>
            <button class="sbtn" title="线框"><svg><use href="#wirebox"/></svg></button>
            <button class="sbtn" title="透明"><svg><use href="#glassbox"/></svg></button>
            <span class="sep"></span>
            <button class="sbtn" title="端点" aria-pressed="true"><svg><use href="#sEnd"/></svg></button>
            <button class="sbtn" title="中点" aria-pressed="true"><svg><use href="#sMid"/></svg></button>
            <button class="sbtn" title="控制点"><svg><use href="#sCurve"/></svg></button>
            <button class="sbtn" title="交点"><svg><use href="#sCross"/></svg></button>
            <button class="sbtn" title="圆弧中心" aria-pressed="true"><svg><use href="#sCenter"/></svg></button>
            <button class="sbtn" title="象限点"><svg><use href="#sQuad"/></svg></button>
            <button class="sbtn" title="现有点" aria-pressed="true"><svg><use href="#sPoint"/></svg></button>
            <button class="sbtn" title="曲线上的点" aria-pressed="true"><svg><use href="#sOn"/></svg></button>
            <button class="sbtn" title="面上的点"><svg><use href="#sFace"/></svg></button>
            <span class="sep"></span>
            <button class="sbtn" title="栅格"><svg><use href="#sGrid"/></svg></button>
            <button class="arrow more end"></button>
        </div>

        <div class="status">
            <span class="cell grow"></span>
            <span class="cell grow message">体 (0) &nbsp;已选定</span>
            <span class="cell"></span>
            <span class="cell wide"></span>
            <span class="cell icons">
                <svg><use href="#noise"/></svg>
                <svg><use href="#fullscreen"/></svg>
            </span>
        </div>

        <main class="work">
            <div class="tabs">
                <button title="装配导航器"><svg><use href="#asmnav"/></svg></button>
                <button title="约束导航器"><svg><use href="#mirror"/></svg></button>
                <button title="部件导航器" class="active"><svg><use href="#partnav"/></svg></button>
                <button title="重用库"><svg><use href="#books"/></svg></button>
                <button title="HD3D 工具" class="apart"><svg><use href="#info"/></svg></button>
                <button title="Web 浏览器" class="apart"><svg><use href="#webdoc"/></svg></button>
                <button title="历史记录" class="apart"><svg><use href="#clock"/></svg></button>
                <button title="系统材料"><svg><use href="#cards"/></svg></button>
                <button title="可视化"><svg><use href="#rainbow"/></svg></button>
                <button title="加工向导"><svg><use href="#machine"/></svg></button>
                <button title="角色"><svg><use href="#people"/></svg></button>
                <button title="系统场景"><svg><use href="#cards2"/></svg></button>
            </div>

            <aside class="panel">
                <h2><svg><use href="#pin"/></svg>部件导航器</h2>
                <div class="treebox">
                    <div class="col-head"><span>名称</span><i class="sort"></i></div>
                    <div class="tree-area">
                        <div class="tree">
                            <div class="root"><span class="minus"></span><svg><use href="#folder"/></svg>模型历史记录</div>
                            <ul id="tree"></ul>
                        </div>
                        <div class="vscroll"><i class="up"></i><i class="thumb"></i><i class="down"></i></div>
                    </div>
                    <div class="hscroll"><i class="left"></i><i class="thumb"></i><i class="right"></i></div>
                </div>
                <div class="splitter"><i></i></div>
            </aside>

            <section class="viewport">
                <svg viewBox="228 235 958 589">
                    <defs>
                        <clipPath id="ringHole"><ellipse cx="708" cy="402" rx="47" ry="28"/></clipPath>
                        <clipPath id="opening"><path d="M476 604L610 680V755L476 678z"/></clipPath>
                        <linearGradient id="coneR"><stop offset="0" stop-color="#7a4a4a"/><stop offset="1" stop-color="#f0b0b0"/></linearGradient>
                    </defs>
                    <g stroke="#000" stroke-width="1.500" stroke-linejoin="round">
                        <!-- base plate -->
                        <path d="M416 644L434 633 653 750 981 592 999 602 671 791z" fill="#fff"/>
                        <path d="M416 644L671 791V815L416 669z" fill="#a9a9a9"/>
                        <path d="M671 791L999 602V627L671 815z" fill="#c6c6c6"/>
                        <!-- spacers -->
                        <path d="M653 704L981 517V592L653 780z" fill="#c6c6c6"/>
                        <path d="M434 579L653 704V780L434 653z" fill="#a6a6a6"/>
                        <!-- ejector opening -->
                        <path d="M476 604L610 680V755L476 678z" fill="#fff"/>
                        <g clip-path="url(#opening)">
                            <path d="M476 600L491 608V630L478 638z" fill="#c6c6c6"/>
                            <path d="M477 638L610 712V729L477 655z" fill="#7d8790"/>
                            <path d="M477 655L610 729V750L477 677z" fill="#9d8287"/>
                            <path d="M491 608h44v30q-20 10-44 4z" fill="#2a2ae0" stroke="none"/>
                            <path d="M490 618q20 8 45 2M490 625q20 8 45 2M490 632q20 8 45 2M489 639q20 8 46 1" fill="none" stroke-width="2"/>
                            <path d="M533 636l7 3v5l-9-3z" fill="#1818a0"/>
                            <path d="M586 660h26v35q-16 3-26-6z" fill="#2a2ae0" stroke="none"/>
                            <path d="M586 672q10 7 26 6M586 679q10 7 26 6M586 686q10 7 26 6M588 692q10 6 22 5" fill="none" stroke-width="2"/>
                            <path d="M599 703l11 6M604 700h8v6z" fill="#3030d0"/>
                        </g>
                        <path d="M476 604V678M610 680V755" fill="none" stroke-width="2"/>
                        <!-- cavity plates -->
                        <path d="M434 523L653 648V704L434 579z" fill="#ab5d60"/>
                        <path d="M653 648L981 462V517L653 704z" fill="#ca6c71"/>
                        <path d="M434 460L653 593V648L434 523z" fill="#6088ae"/>
                        <path d="M653 593L981 420V462L653 648z" fill="#719fcb"/>
                        <path d="M434 523L653 648 981 462" fill="none" stroke-width="2.500"/>
                        <path d="M517 557L569 586V608L517 579z" fill="#6b6b6b"/>
                        <path d="M515 577L571 608V613L515 581z" fill="#ffc9c4"/>
                        <ellipse cx="832" cy="584" rx="5" ry="6.500" fill="#777" transform="rotate(20 832 584)"/>
                        <ellipse cx="802" cy="600" rx="5" ry="6.500" fill="#777" transform="rotate(20 802 600)"/>
                        <path d="M661 782l3-2 7 4 8-4 3 2-11 6z" fill="#fff"/>
                        <!-- top clamp plate -->
                        <path d="M416 432L671 579V604L416 457z" fill="#a8a8a8"/>
                        <path d="M671 579L999 389V417L671 604z" fill="#c6c6c6"/>
                        <path d="M744 242L999 389 671 579 416 432z" fill="#fff"/>
                    </g>
                    <use href="#screw" x="710" y="289" width="30" height="18"/>
                    <use href="#screw" x="604" y="350" width="30" height="18"/>
                    <use href="#screw" x="499" y="411" width="30" height="18"/>
                    <use href="#screw" x="885" y="391" width="30" height="18"/>
                    <use href="#screw" x="780" y="452" width="30" height="18"/>
                    <use href="#screw" x="674" y="512" width="30" height="18"/>
                    <!-- locating ring -->
                    <g stroke="#000" stroke-width="2">
                        <path d="M646 402v8a62 36 0 0 0 124 0v-8z" fill="#8f4a20"/>
                        <ellipse cx="708" cy="402" rx="62" ry="36" fill="#ff8c42"/>
                        <ellipse cx="708" cy="402" rx="47" ry="28" fill="#8a441c"/>
                        <g clip-path="url(#ringHole)">
                            <ellipse cx="708" cy="415" rx="45" ry="27" fill="#fff" stroke-width="1"/>
                            <ellipse cx="708" cy="427" rx="20" ry="9" fill="#a5cf3c"/>
                            <circle cx="697" cy="425" r="4"/>
                        </g>
                        <ellipse cx="708" cy="402" rx="47" ry="28" fill="none" stroke-width="2.500"/>
                        <circle cx="669" cy="379" r="5"/>
                    </g>
                    <!-- work coordinate system -->
                    <path d="M708 454l2 30-2 4-2-4z" fill="#3048d0"/>
                    <path d="M713 435h9l-9 7h9" fill="none" stroke="#3048d0" stroke-width="2"/>
                    <path d="M710 489L728 475l14-4-4 6z" fill="#a8e0b4"/>
                    <path d="M710 493L738 503l9 11-16-7z" fill="url(#coneR)"/>
                    <!-- highlighted body -->
                    <g fill="none" stroke="#f79a40" stroke-linejoin="round">
                        <path d="M746 427q16-8 32 0l36 20q19 12 0 24l-38 22q-16 8-32 0l-40-22q-17-12 0-24z" stroke-width="6"/>
                        <path d="M711 451L768 486M759 428L713 453M762 429L810 456M808 455L746 491M760 480l-12 15M760 480l12 15" stroke-width="4"/>
                        <path d="M772 433l8 2 2-3M784 439l8 3 2-3M796 446l8 3 2-3" stroke-width="3"/>
                        <path d="M760 485v9M756 492h9" stroke-width="5"/>
                        <ellipse cx="705" cy="459" rx="5" ry="9" stroke-width="3"/>
                        <ellipse cx="815" cy="459" rx="5" ry="9" stroke-width="3"/>
                    </g>
                    <text x="732" y="464" class="axis green">YC</text>
                    <text x="731" y="527" class="axis red">XC</text>
                    <!-- view triad -->
                    <path d="M278 753L294 745 309 752V772L294 781 278 773z" fill="#bcbcbc"/>
                    <path d="M278 753L294 745 309 752 294 761z" fill="#d8d8d8"/>
                    <path d="M278 753L294 761V781L278 773z" fill="#989898"/>
                    <path d="M279 771V746" stroke="#2848e8" stroke-width="3"/>
                    <path d="M283 772L300 780" stroke="#e02020" stroke-width="3"/>
                    <circle cx="279" cy="771" r="4" fill="#e8e8e8"/>
                    <path d="M296 776l8 7-9-1z" fill="#e02020"/>
                    <text x="275" y="744" class="axis blue">Z</text>
                    <text x="303" y="791" class="axis red">X</text>
                </svg>
            </section>
        </main>

        <div class="row low">
            <div class="toolbar last">
                <span class="grip"></span>
                <button class="btn" title="查找组件" disabled><svg><use href="#noiseA"/></svg></button>
                <button class="btn" title="添加组件"><svg><use href="#addpart"/></svg></button>
                <button class="btn" title="移动组件"><svg><use href="#movepart"/></svg></button>
                <button class="btn" title="镜像装配"><svg><use href="#mirror"/></svg></button>
                <span class="sep"></span>
                <button class="btn" title="爆炸图"><svg><use href="#parts3"/></svg></button>
                <button class="arrow more"></button>
            </div>
        </div>
        <div class="row low indent">
            <div class="toolbar last">
                <span class="grip"></span>
                <button class="btn" title="草图"><svg><use href="#sketch"/></svg></button>
                <button class="btn-text finish" disabled><svg><use href="#noise"/></svg>完成草图</button>
                <button class="btn" title="轮廓"><svg><use href="#profile"/></svg></button>
                <button class="btn" title="直线"><svg><use href="#line"/></svg></button>
                <button class="btn" title="圆弧"><svg><use href="#arc"/></svg></button>
                <button class="btn" title="圆"><svg><use href="#circle"/></svg></button>
                <button class="btn" title="圆角" disabled><svg><use href="#fillet"/></svg></button>
                <button class="btn" title="倒斜角" disabled><svg><use href="#chamfer"/></svg></button>
                <button class="btn" title="矩形"><svg><use href="#rect"/></svg></button>
                <button class="btn" title="样条"><svg><use href="#spline"/></svg></button>
                <button class="btn" title="点"><svg><use href="#plus"/></svg></button>
                <button class="btn" title="偏置曲线" disabled><svg><use href="#offsetcurve"/></svg></button>
                <button class="arrow"></button>
                <span class="sep"></span>
                <button class="btn" title="快速修剪" disabled><svg><use href="#qtrim"/></svg></button>
                <button class="btn" title="快速延伸" disabled><svg><use href="#qextend"/></svg></button>
                <span class="sep"></span>
                <button class="btn" title="自动判断尺寸" disabled><svg><use href="#dim"/></svg></button>
                <button class="arrow"></button>
                <span class="sep"></span>
                <button class="btn" title="约束" disabled><svg><use href="#constraint"/></svg></button>
                <button class="btn" title="设为对称" disabled><svg><use href="#corner"/></svg></button>
                <button class="arrow"></button>
                <button class="btn" title="显示约束" disabled><svg><use href="#tangent"/></svg></button>
                <button class="btn" title="自动约束" disabled><svg><use href="#showcon"/></svg></button>
                <button class="arrow"></button>
                <button class="arrow more"></button>
            </div>
        </div>
    </div>

    <!-- input method bar floats over the window corner -->
    <div class="ime">
        <span class="mascot"><svg><use href="#penguin"/></svg></span>
        <div class="ime-bar">
            <span>中</span>
            <svg><use href="#moon"/></svg>
            <svg><use href="#punct"/></svg>
            <svg><use href="#wrench"/></svg>
            <span>简</span>
        </div>
    </div>

    <script>
        const features = [];
        for (let i = 0; i <= 12; i++) {
            features.push(["体", "body"]);
        }
        features.push(
            ["求和", "unite"], ["块", "cube"], ["块", "cube"], ["块", "cube"],
            ["求差", "subtract"], ["求差", "subtract"], ["圆柱", "cyl"], ["圆柱", "cyl"],
            ["求和", "unite"], ["圆柱", "cyl"], ["圆柱", "cyl"]
        );

        const tree = document.getElementById("tree");
        features.forEach(([name, icon], i) => {
            const li = document.createElement("li");
            if (i === 0) li.className = "selected";
            li.innerHTML = `
                <i class="branch"></i><i class="twig"></i>
                <input type="checkbox" id="f${i}" checked>
                <svg><use href="#${icon}"/></svg>
                <label for="f${i}">${name}<span class="key">(${i})</span></label>
            `;
            tree.appendChild(li);
        });
    </script>
</body>
</html>
```
FILE: styles.css
```
* {
    box-sizing: border-box;
}

body {
    margin: 0;
    height: 100vh;
    display: flex;
    flex-direction: column;
    overflow: hidden;
    background: #0c0c0c;
    color: #000;
    font: 12px/16px "Noto Sans CJK SC", sans-serif;
}

button {
    padding: 0;
    border: none;
    background: none;
    color: inherit;
    font: inherit;
}

h1, h2, ul {
    margin: 0;
    padding: 0;
    font-size: 12px;
}

.sprite {
    position: absolute;
    width: 0;
    height: 0;
}

.key {
    font-family: "Liberation Mono", monospace;
    font-size: 10px;
    white-space: pre;
}

/* title bar */
.titlebar {
    flex: none;
    height: 30px;
    display: flex;
    align-items: center;
    gap: 4px;
    padding: 0 5px 2px 6px;
    background: linear-gradient(#55555a, #77777c 5px, #4a4a4e 10px, #1b1b1b 10px, #1b1b1b);
    color: #fff;
}

.app-icon {
    width: 16px;
    height: 16px;
}

.titlebar h1 {
    flex: 1;
    font: 13px/16px "Noto Sans", "Noto Sans CJK SC", sans-serif;
}

.brand {
    margin-right: 22px;
    font: 800 12px/16px "Open Sans", sans-serif;
}

.win-btn {
    width: 18px;
    height: 18px;
    border: 1px solid #777;
    border-radius: 3px;
    background: linear-gradient(#6a6a6a, #2c2c2c);
}

.win-btn svg,
.mdi svg {
    display: block;
    width: 100%;
    height: 100%;
}

.win-btn.close {
    border-color: #f0a090;
    background: linear-gradient(#f08870, #d83818);
}

.window {
    flex: 1;
    min-height: 0;
    display: flex;
    flex-direction: column;
    margin: 0 4px 8px;
    background: #d6d6d6;
}

/* menu */
.menubar {
    flex: none;
    height: 24px;
    display: flex;
    align-items: center;
    gap: 13px;
    padding-right: 5px;
    background: #e2e2e2;
    border-bottom: 1px solid #b8b8b8;
}

.doc-icon {
    width: 15px;
    height: 15px;
    margin: 0 -7px 0 -13px;
}

.menubar button {
    white-space: nowrap;
}

.mdi {
    display: flex;
    gap: 3px;
    margin-left: auto;
}

.mdi button {
    width: 16px;
    height: 16px;
    border: 1px solid #777;
    border-radius: 3px;
    background: #f2f2f2;
}

/* toolbars */
.row {
    flex: none;
    height: 35px;
    display: flex;
    background: linear-gradient(#dedede, #cfcfcf);
    border-bottom: 1px solid #f4f4f4;
}

.row.tall {
    height: 61px;
    background: linear-gradient(#dadada, #cdcdcd);
}

.row.flat {
    background: #cdcdcd;
    border-bottom-color: #999;
}

.row.low {
    height: 34px;
    background: linear-gradient(#e4e4e4, #d6d6d6);
}

.row.indent {
    padding-left: 150px;
    background: #d2d2d2;
    border-bottom: none;
}

.toolbar {
    display: flex;
    align-items: center;
    padding-right: 4px;
    border-left: 1px solid #f4f4f4;
}

.toolbar:first-child {
    border-left: none;
}

.toolbar.last {
    border-right: 1px solid #bcbcbc;
}

.tall .toolbar {
    padding-right: 0;
}

.indent .toolbar {
    border-left: 1px solid #f4f4f4;
}

.toolbar.far {
    margin-left: 90px;
}

.toolbar.near {
    margin-left: 30px;
}

.toolbar.grow {
    flex: 1;
    padding-right: 4px;
}

.toolbar.features {
    width: 600px;
    padding-right: 4px;
}

.grip {
    flex: none;
    width: 8px;
    height: 24px;
    border-right: 3px solid transparent;
    border-left: 3px solid transparent;
    background: repeating-linear-gradient(#999 0 2px, #f4f4f4 2px 4px) content-box;
}

.tall .grip {
    height: 48px;
}

.sep {
    flex: none;
    width: 5px;
    height: 28px;
    border-left: 2px solid transparent;
    border-right: 2px solid transparent;
    background: #f6f6f6 content-box;
}

.tall .sep {
    height: 56px;
}

.btn {
    flex: none;
    width: 31px;
    height: 28px;
}

.btn svg,
.btn-text svg,
.big svg {
    flex: none;
    width: 24px;
    height: 24px;
}

.btn svg {
    display: block;
    margin: auto;
}

.low .btn svg,
.flat .btn svg {
    width: 22px;
    height: 22px;
}

.abc {
    font: bold 7px "Liberation Sans", sans-serif;
    text-anchor: middle;
}

.btn-text {
    display: flex;
    align-items: center;
    gap: 4px;
    white-space: nowrap;
}

.btn-text.start {
    width: 67px;
    padding-left: 2px;
}

.btn-text.finder {
    width: 95px;
    padding-left: 6px;
}

.btn-text.finder svg {
    width: 22px;
    height: 22px;
}

.btn-text.finish {
    width: 82px;
    padding-left: 3px;
}

.btn-text:disabled,
.big:disabled {
    color: #979797;
}

.arrow {
    flex: none;
    width: 12px;
    height: 16px;
    display: flex;
    align-items: center;
    justify-content: center;
}

.arrow::after,
.caret {
    content: "";
    border: 3px solid transparent;
    border-top-color: #000;
    border-bottom: none;
}

.arrow.more {
    align-self: flex-end;
}

.arrow.end {
    margin-left: auto;
}

.big {
    flex: none;
    align-self: flex-start;
    width: 60px;
    display: flex;
    flex-direction: column;
    align-items: center;
    gap: 4px;
    padding-top: 4px;
    line-height: 12px;
    white-space: nowrap;
}

.overflow {
    align-self: stretch;
    display: flex;
    flex-direction: column;
    justify-content: space-between;
    margin-left: auto;
    font-size: 16px;
    line-height: 12px;
}

/* selection bar */
.selectbar {
    flex: none;
    height: 27px;
    display: flex;
    align-items: center;
    padding: 0 3px 0 5px;
    background: linear-gradient(#c4c4c4, #dcdcdc 8px);
    border-bottom: 1px solid #f4f4f4;
}

.selectbar .sep {
    width: 6px;
    height: 24px;
    border-right-width: 3px;
}

.combo {
    position: relative;
    width: 110px;
    height: 16px;
    margin-right: 7px;
}

.combo.wide {
    width: 116px;
    margin-right: 6px;
}

.combo select {
    display: block;
    width: 100%;
    height: 16px;
    padding: 0 18px 0 1px;
    border: 1px solid #456080;
    border-radius: 2px;
    appearance: none;
    background: #fff;
    color: #000;
    font: 12px/14px "Noto Sans CJK SC", sans-serif;
}

.combo::before {
    content: "";
    position: absolute;
    top: 1px;
    right: 1px;
    width: 16px;
    height: 14px;
    background: linear-gradient(#d0e8ff, #6cb0f0);
    pointer-events: none;
}

.combo::after {
    content: "";
    position: absolute;
    top: 5px;
    right: 4px;
    border: 5px solid transparent;
    border-top: 7px solid #111;
    border-bottom: none;
    pointer-events: none;
}

.sbtn {
    flex: none;
    width: 23px;
    height: 22px;
    border: 1px solid transparent;
    border-radius: 2px;
}

.sbtn[aria-pressed="true"] {
    border-color: #444;
    background: #fff;
}

.sbtn svg {
    display: block;
    width: 17px;
    height: 17px;
    margin: auto;
}

/* status line */
.status {
    flex: none;
    height: 23px;
    display: flex;
    background: #dadada;
    border-bottom: 1px solid #888;
}

.cell {
    width: 20px;
    border-right: 1px solid #f6f6f6;
}

.cell.grow {
    flex: 1;
}

.cell.wide {
    width: 36px;
}

.cell.icons {
    width: 42px;
    display: flex;
    align-items: center;
    gap: 6px;
    padding-left: 3px;
    border: none;
}

.cell.icons svg {
    width: 15px;
    height: 15px;
}

.message {
    padding-left: 4px;
    font-weight: bold;
    line-height: 20px;
}

/* work area */
.work {
    flex: 1;
    min-height: 0;
    display: flex;
}

.tabs {
    flex: none;
    width: 33px;
    display: flex;
    flex-direction: column;
    align-items: flex-end;
    gap: 2px;
    padding-top: 16px;
    background: linear-gradient(90deg, #8e8e8e, #ababab);
}

.tabs button {
    flex: none;
    width: 27px;
    height: 40px;
    border: 1px solid #666;
    border-right: none;
    border-radius: 4px 0 0 4px;
    background: #cbcbcb;
}

.tabs .active {
    width: 28px;
    background: #ececec;
}

.tabs .apart {
    margin-top: 12px;
}

.tabs svg {
    display: block;
    width: 24px;
    height: 24px;
    margin: auto;
}

.panel {
    flex: none;
    width: 191px;
    display: flex;
    flex-direction: column;
    padding: 0 10px 1px 9px;
    background: #ebebeb;
    border-bottom: 1px solid #777;
}

.panel h2 {
    display: flex;
    align-items: center;
    gap: 13px;
    height: 30px;
    padding-left: 5px;
}

.panel h2 svg {
    width: 12px;
    height: 12px;
}

.treebox {
    flex: 1;
    min-height: 0;
    display: flex;
    flex-direction: column;
    border: 1px solid #555;
    background: #fff;
}

.col-head {
    flex: none;
    height: 17px;
    display: flex;
    align-items: center;
    gap: 16px;
    padding-left: 7px;
    background: linear-gradient(90deg, transparent 153px, #a4a4a4 153px), linear-gradient(#f8f8f8, #cfcfcf);
    border-bottom: 1px solid #999;
}

.sort {
    border: 5px solid transparent;
    border-bottom-color: #000;
    border-top: none;
}

.tree-area {
    flex: 1;
    min-height: 0;
    display: flex;
}

.tree {
    flex: 1;
    overflow: hidden;
    color: #222;
}

.root,
.tree li {
    height: 20px;
    display: flex;
    align-items: center;
    border-bottom: 1px solid #e2e2e2;
    white-space: nowrap;
}

.root {
    gap: 2px;
    padding-left: 5px;
}

.root svg {
    width: 17px;
    height: 16px;
}

.minus {
    width: 9px;
    height: 9px;
    margin-right: 3px;
    border: 1px solid #888;
    background: linear-gradient(#333, #333) center / 5px 1px no-repeat;
}

.tree li:nth-child(odd) {
    background: #f5f5f5;
}

.branch {
    width: 31px;
    height: 20px;
    border-right: 1px dotted #999;
}

.twig {
    width: 8px;
    margin-right: 2px;
    border-top: 1px dotted #999;
}

.tree input {
    position: relative;
    width: 12px;
    height: 12px;
    margin: 0 3px 0 0;
    appearance: none;
    border: 1px solid #000;
    background: #fff;
}

.tree input:checked::after {
    content: "";
    position: absolute;
    top: 0;
    left: 3px;
    width: 5px;
    height: 8px;
    border: solid #10b428;
    border-width: 0 2px 2px 0;
    transform: rotate(40deg);
}

.tree li svg {
    flex: none;
    width: 15px;
    height: 15px;
}

.tree label {
    flex: 1;
    height: 19px;
    padding-left: 2px;
    line-height: 18px;
}

.tree label .key {
    margin-left: 8px;
}

.tree .selected label {
    background: #3399ff;
    color: #fff;
}

.vscroll {
    width: 17px;
    display: flex;
    flex-direction: column;
    align-items: center;
    padding: 8px 0 6px;
    background: #f0f0f0;
}

.vscroll .thumb {
    width: 15px;
    height: 16px;
    margin: 9px 0 auto;
    border: 1px solid #999;
    background: #dcdcdc;
}

.up,
.down,
.left,
.right {
    border: 3px solid transparent;
}

.up {
    border-bottom-color: #000;
    border-top: none;
}

.down {
    border-top-color: #000;
    border-bottom: none;
}

.left {
    border-right-color: #000;
    border-left: none;
}

.right {
    border-left-color: #000;
    border-right: none;
}

.hscroll {
    flex: none;
    height: 20px;
    display: flex;
    align-items: center;
    padding: 0 24px 0 7px;
    background: #f0f0f0;
}

.hscroll .thumb {
    width: 57px;
    height: 15px;
    margin: 0 auto 0 9px;
    border: 1px solid #888;
    border-radius: 2px;
    background: repeating-linear-gradient(90deg, #555 0 1px, transparent 1px 3px) center / 9px 6px no-repeat, linear-gradient(#f4f4f4, #c4c4c4);
}

.splitter {
    flex: none;
    height: 15px;
    display: flex;
    justify-content: center;
    align-items: center;
    background: linear-gradient(#bbb, #bbb) center / 100% 1px no-repeat;
}

.splitter i {
    width: 28px;
    height: 5px;
    border: 1px solid #aaa;
    background: #ddd;
}

.viewport {
    flex: 1;
    min-width: 0;
    background: #000;
}

.viewport svg {
    display: block;
    width: 100%;
    height: 100%;
}

.axis {
    font: 12px "Open Sans", sans-serif;
}

.green {
    fill: #2a8a3c;
}

.red {
    fill: #c83030;
}

.blue {
    fill: #3050f0;
}

/* input method */
.ime {
    position: fixed;
    right: 0;
    bottom: 0;
    display: flex;
    align-items: flex-end;
}

.mascot {
    width: 40px;
    height: 34px;
    padding: 2px 2px 0;
    border: 2px solid #2f8ff0;
    border-bottom: none;
    background: #dde6f2;
}

.mascot svg {
    display: block;
    width: 32px;
    height: 32px;
}

.ime-bar {
    width: 98px;
    height: 18px;
    display: flex;
    align-items: center;
    gap: 7px;
    padding: 4px 0 0 4px;
    overflow: hidden;
    border-top: 1px solid #2f8ff0;
    background: #fff;
    color: #1a7ce8;
    font-size: 13px;
    font-weight: bold;
}

.ime-bar svg {
    flex: none;
    width: 14px;
    height: 14px;
}
```
